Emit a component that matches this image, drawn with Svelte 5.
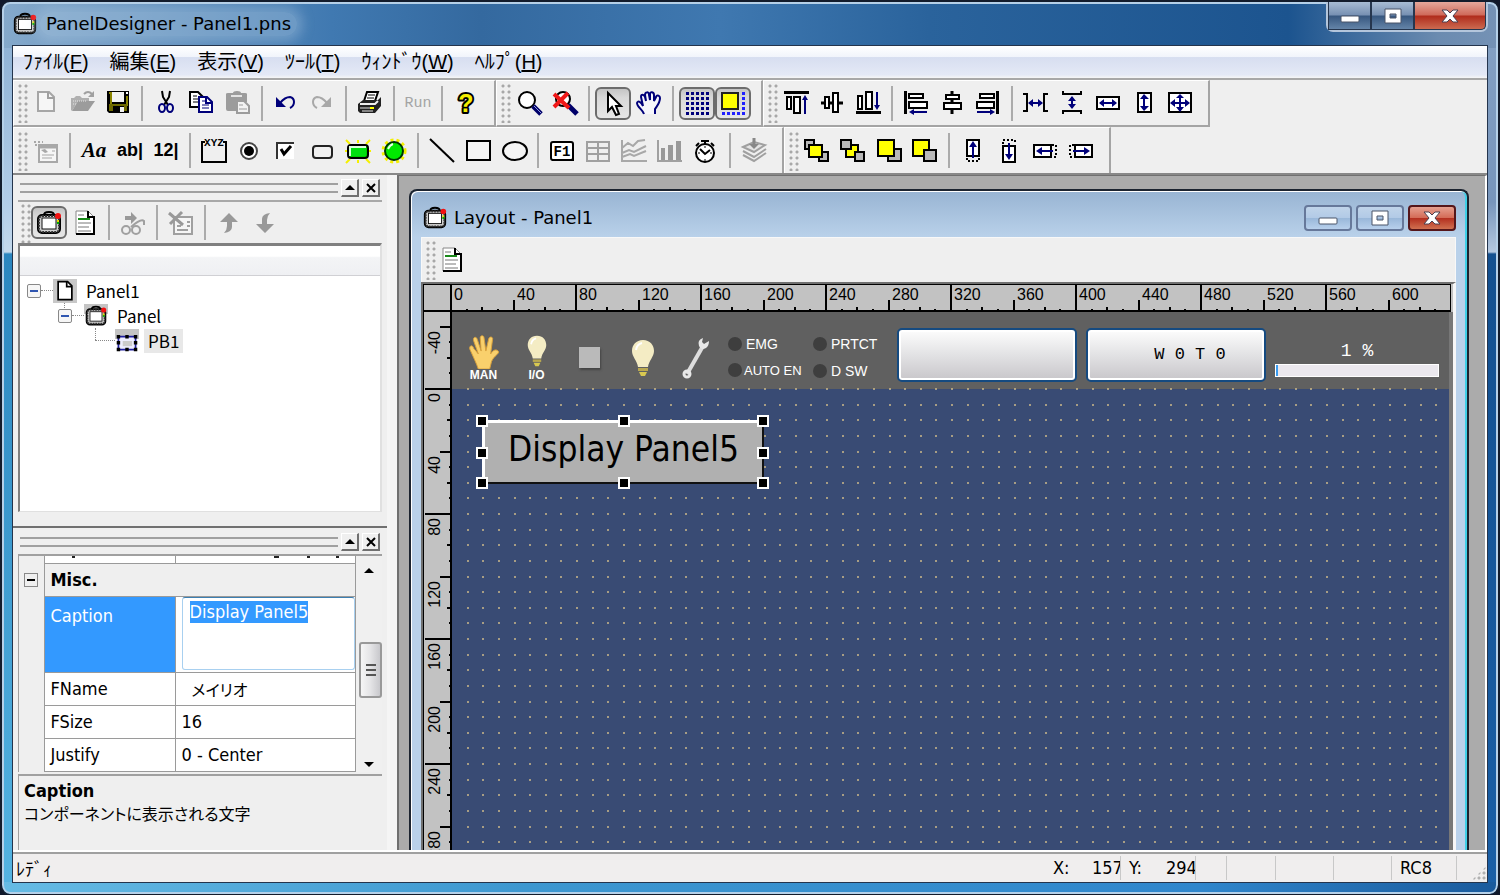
<script lang="ts">
    import { onMount } from 'svelte';

    type Item = { icon?: string; text?: string; kind?: string; label: string; pressed?: boolean; disabled?: boolean } | null;

    const tb = (icon: string, label: string, opts = {}): Item => ({ icon, label, ...opts });

    const K = 'fill="none" stroke="#000" stroke-width="2"';
    const W = 'fill="#fff" stroke="#000" stroke-width="2"';
    const N = 'fill="none" stroke="#00007a" stroke-width="2"';
    const NF = 'fill="#00007a"';
    const G = 'fill="none" stroke="#a0a0a0" stroke-width="2"';
    const Y = 'fill="#ff0" stroke="#000" stroke-width="2"';
    const B = 'fill="#b8b8b8" stroke="#000" stroke-width="2"';
    const DOT = 'fill="none" stroke="#000" stroke-width="2" stroke-dasharray="2 2"';

    const cells = [5, 10, 15, 20, 25];

    const icons: Record<string, string> = {
        new: `<path d="M6 3H17L22 8V22H6Z" fill="#f6f6f6" stroke="#a6a6a6" stroke-width="2"/><path d="M16 3V9H22" ${G}/>`,
        open: `<path d="M3 21V9H6L8 7H12L14 9H21V12H10L4 22Z" fill="#b0b0b0"/><path d="M4 22L10 12H27L20 22Z" fill="#9c9c9c"/><path d="M5 12h14M5 15h4" stroke="#e6e6e6" stroke-dasharray="1 1"/><path d="M16 5Q20 1 24 5" ${G}/><path d="M26 2V8H20Z" fill="#a0a0a0"/>`,
        save: `<path d="M3 2H25V24H5L3 22Z" fill="#000"/><path d="M5 4H7V16H23V7" fill="none" stroke="#8a8400" stroke-width="2"/><path d="M5 15h18v7H5Z" fill="#6d6900"/><path d="M8 3H20V13H8Z" fill="#f2f2f2"/><path d="M9 17H20V24H9Z" fill="#000"/><path d="M16 18h4v5h-4Z" fill="#f2f2f2"/><path d="M22 3h2v2h-2Z" fill="#fff"/>`,
        cut: `<path d="M10 2L11 8L16 16M18 2L17 8L12 16" ${K}/><ellipse cx="10" cy="19" rx="3" ry="4" ${N}/><ellipse cx="18" cy="19" rx="3" ry="4" ${N}/>`,
        copy: `<path d="M2 3H10L15 8V18H2Z" ${W}/><path d="M5 7h4M5 10h7M5 13h7" stroke="#000"/><path d="M11 8H19L24 13V23H11Z" fill="#fff" stroke="#00007a" stroke-width="2"/><path d="M18 8V14H24" ${N}/><path d="M14 12h3M14 16h7M14 19h7" stroke="#00007a"/>`,
        paste: `<path d="M2 5Q2 4 4 4H9Q9 2 13 2Q17 2 17 4H21Q23 4 23 5V13H12V22H4Q2 22 2 20Z" fill="#9c9c9c"/><path d="M7 7h11" stroke="#e4e4e4" stroke-width="2"/><path d="M13 12H20L25 17V24H13Z" fill="#f2f2f2" stroke="#9c9c9c" stroke-width="2"/><path d="M15 16h4M15 20h8" stroke="#9c9c9c"/>`,
        undo: `<path d="M4 8V18H14Z" ${NF}/><path d="M8 14Q13 8 18 8Q22 9 22 13Q22 17 18 19" ${N}/>`,
        redo: `<path d="M23 8V18H13Z" fill="#a8a8a8"/><path d="M19 14Q14 8 9 8Q5 9 5 13Q5 17 9 19" fill="none" stroke="#a8a8a8" stroke-width="2"/>`,
        print: `<path d="M8 12L11 3H22L19 12" ${W}/><path d="M12 6h7M11 9h7" stroke="#000"/><path d="M2 15L7 11H22L25 8V17L19 24H4L2 22Z" fill="#222"/><path d="M4 15H19L22 12" stroke="#eee" fill="none" stroke-width="2"/><path d="M4 19h14M6 22h11" stroke="#e6e6e6"/><path d="M14 19h4" stroke="#ff0" stroke-width="2"/>`,
        help: `<text x="14" y="23" text-anchor="middle" font-family="Liberation Sans" font-size="25" font-weight="bold" fill="#f4ee00" stroke="#000" stroke-width="4" stroke-linejoin="round" paint-order="stroke">?</text>`,
        find: `<circle cx="12" cy="11" r="8" ${W}/><path d="M18 17L26 25" stroke="#00006a" stroke-width="5"/><path d="M19 17L26 24" stroke="#8f9be0"/>`,
        unfind: `<circle cx="12" cy="10" r="7" ${W}/><path d="M17 16L26 25" stroke="#00006a" stroke-width="5"/><path d="M3 5L18 19M17 4L3 18" stroke="#f01818" stroke-width="4"/>`,
        cursor: `<path d="M9 4V22L13 18L17 26L20 25L17 17H22Z" fill="#fff" stroke="#000" stroke-width="2"/>`,
        hand: `<path d="M9 25C8 21 2 18 2 14C3 11 6 13 8 17L6 8C6 5 9 5 10 8L11 12L10 6C10 3 14 2 14 6L15 11L15 5C15 2 19 3 19 6V12L21 8C22 5 25 7 25 9C25 14 22 17 20 20V25" fill="#f6f6fb" stroke="#00007a" stroke-width="2"/>`,
        grid: cells.map((y) => cells.map((x) => `<path d="M${x - 2} ${y - 2}h3v3h-3Z" ${NF}/>`).join('')).join(''),
        snap: `<path d="M3 4H19V20H3Z" fill="#ff0" stroke="#222" stroke-width="2"/>` + cells.map((n) => `<path d="M23 ${n - 2}h3v3h-3ZM${n - 2} 23h3v3h-3Z" fill="#2020ff"/>`).join(''),
        alignTop: `<path d="M2 2H27V5H2Z"/><path d="M5 8H9V20H5ZM12 8H18V24H12Z" ${W}/><path d="M23 25V8" ${N}/><path d="M20 11L23 6L26 11Z" ${NF}/>`,
        alignMiddle: `<path d="M3 14H25" stroke="#000" stroke-width="3"/><path d="M7 8H11V19H7ZM15 4H20V23H15Z" ${W}/>`,
        alignBottom: `<path d="M2 22H27V25H2Z"/><path d="M4 7H8V20H4ZM12 3H18V20H12Z" ${W}/><path d="M23 3V18" ${N}/><path d="M20 16L23 21L26 16Z" ${NF}/>`,
        alignLeft: `<path d="M2 2H5V25H2Z"/><path d="M7 5H21V9H7ZM7 13H25V19H7Z" ${W}/><path d="M10 23H25" ${N}/><path d="M12 20L7 23L12 26Z" ${NF}/>`,
        alignCenter: `<path d="M14 2V25" stroke="#000" stroke-width="3"/><path d="M8 6H21V10H8ZM6 14H23V20H6Z" ${W}/>`,
        alignRight: `<path d="M22 2H25V25H22Z"/><path d="M6 5H20V9H6ZM3 13H20V19H3Z" ${W}/><path d="M3 23H18" ${N}/><path d="M16 20L21 23L16 26Z" ${NF}/>`,
        spaceH: `<path d="M1 5H5V22H1M26 5H22V22H26" ${K}/><path d="M8 14H19" ${N}/><path d="M6 14L11 10V18ZM21 14L16 10V18Z" ${NF}/>`,
        spaceV: `<path d="M5 2V5H23V2M5 25V22H23V25" ${K}/><path d="M14 9V18" ${N}/><path d="M14 7L10 12H18ZM14 20L10 15H18Z" ${NF}/>`,
        sameW: `<path d="M3 8H25V20H3Z" ${W}/><path d="M8 14H20" ${N}/><path d="M5 14L10 10V18ZM23 14L18 10V18Z" ${NF}/>`,
        sameH: `<path d="M8 4H21V23H8Z" ${W}/><path d="M14 8V20" ${N}/><path d="M14 5L10 10H19ZM14 22L10 17H19Z" ${NF}/>`,
        sameBoth: `<path d="M3 4H25V23H3Z" ${W}/><path d="M6 14H22M14 8V20" ${N}/><path d="M4 14L9 10V18ZM24 14L19 10V18ZM14 5L10 9H18ZM14 23L10 18H18Z" ${NF}/>`,
        dialog: `<path d="M7 8H25V25H7Z" fill="#f6f6f6" stroke="#a8a8a8" stroke-width="2"/><path d="M7 10H25" stroke="#a8a8a8" stroke-width="3"/><path d="M10 18h12M10 21h10M20 14h3" stroke="#a8a8a8"/><path d="M2 5h9M3 8h9" stroke="#a8a8a8" stroke-width="2" stroke-dasharray="2 2"/><path d="M9 13L13 12L16 15L13 16Z" fill="#a8a8a8"/>`,
        group: `<path d="M5 5H2V25H26V5H23" ${K}/><text x="14" y="9" text-anchor="middle" font-family="Liberation Mono" font-size="11" font-weight="bold">XYZ</text>`,
        radio: `<circle cx="13" cy="14" r="8" fill="#fff" stroke="#444" stroke-width="2"/><circle cx="13" cy="14" r="5"/>`,
        check: `<path d="M4 5H22V22H4Z" fill="#fff"/><path d="M5 22V6H22" fill="none" stroke="#333" stroke-width="2"/><path d="M9 12L12 17L19 9" fill="none" stroke="#000" stroke-width="3"/>`,
        button: `<rect x="5" y="9" width="19" height="12" rx="3" fill="#efefef" stroke="#222" stroke-width="2"/>`,
        lampButton: `<path d="M2 3l4 4M14 3v3M26 3l-4 4M1 14h3M24 14h3M2 26l4-4M14 26v-3M26 26l-4-4" stroke="#f4f000" stroke-width="2"/><rect x="4" y="8" width="20" height="13" rx="3" fill="#0c0" stroke="#000" stroke-width="2"/><path d="M6 19V10H22" fill="none" stroke="#dfd" stroke-width="2"/><path d="M7 11H22V19H7Z" fill="#00e010"/>`,
        lampRound: `<circle cx="14" cy="14" r="11" fill="none" stroke="#f4f000" stroke-width="3" stroke-dasharray="3 3"/><circle cx="14" cy="14" r="9" fill="#00e800" stroke="#030" stroke-width="2"/><path d="M8 12Q10 8 13 7" fill="none" stroke="#eaffea" stroke-width="2"/>`,
        line: `<path d="M2 2L26 25" ${K}/>`,
        rect: `<path d="M3 4H26V23H3Z" fill="#f5f5f5" stroke="#000" stroke-width="2"/>`,
        ellipse: `<ellipse cx="15" cy="14" rx="12" ry="9" fill="#f5f5f5" stroke="#000" stroke-width="2"/>`,
        fkey: `<rect x="3" y="5" width="22" height="18" rx="2" ${W}/><path d="M4 23H25V7" fill="none" stroke="#000" stroke-width="2"/><text x="14" y="19" text-anchor="middle" font-family="Liberation Mono" font-size="14" font-weight="bold">F1</text>`,
        table: `<path d="M3 5H25V24H3ZM3 11H25M3 17H25M14 5V24" ${G}/>`,
        lines: `<path d="M2 3V24H27M2 16L9 13L14 15L26 9M2 20L10 17L14 19L26 14M2 11L8 6L13 9L18 4L25 3" fill="none" stroke="#a8a8a8" stroke-width="2"/>`,
        bars: `<path d="M2 3V24H26" ${G}/><path d="M5 11H9V23H5ZM12 8H17V23H12ZM20 4H25V23H20Z" fill="#999"/>`,
        timer: `<circle cx="13" cy="16" r="9" fill="#fff" stroke="#000" stroke-width="2"/><path d="M9 4H17M13 4V7M4 9L7 6M22 9L19 6" ${K}/><path d="M8 12L13 17L18 13" ${K}/><path d="M13 9v2M13 22v2M6 16h2M18 16h2" stroke="#000"/>`,
        layers: `<path d="M3 18L14 24L26 16M3 14L14 20L26 12" ${G}/><path d="M3 10L14 5L25 8L14 15Z" fill="#e4e4e4" stroke="#a0a0a0" stroke-width="2"/><path d="M14 1V9" stroke="#888" stroke-width="3"/><path d="M9 7H19L14 12Z" fill="#888"/>`,
        forward: `<path d="M2 3H11V12H2ZM16 15H25V24H16Z" ${B}/><path d="M6 8H19V20H6Z" ${Y}/>`,
        backward: `<path d="M7 8H19V20H7Z" ${Y}/><path d="M2 3H12V12H2ZM16 15H25V24H16Z" ${B}/>`,
        front: `<path d="M13 12H26V24H13Z" ${B}/><path d="M3 3H19V19H3Z" ${Y}/>`,
        back: `<path d="M2 3H18V19H2Z" ${Y}/><path d="M13 13H25V24H13Z" ${B}/>`,
        moveUp: `<path d="M8 3H20V19H8Z" ${W}/><path d="M8 21V24H20V20" ${DOT}/><path d="M14 7V21" ${N}/><path d="M14 4L10 10H18Z" ${NF}/>`,
        moveDown: `<path d="M8 9H20V25H8Z" ${W}/><path d="M8 7V3H20V7" ${DOT}/><path d="M14 6V19" ${N}/><path d="M14 23L10 17H18Z" ${NF}/>`,
        moveLeft: `<path d="M3 8H20V20H3Z" ${W}/><path d="M21 8H25V20H21" ${DOT}/><path d="M8 14H22" ${N}/><path d="M5 14L11 10V18Z" ${NF}/>`,
        moveRight: `<path d="M8 8H25V20H8Z" ${W}/><path d="M7 8H3V20H7" ${DOT}/><path d="M6 14H20" ${N}/><path d="M23 14L17 10V18Z" ${NF}/>`,
        panel: `<path d="M9 6Q9 3 14 3Q19 3 19 6" ${K}/><rect x="3" y="6" width="22" height="18" rx="4" fill="#d0d0d0" stroke="#000" stroke-width="2"/><rect x="4" y="7" width="20" height="16" rx="3" fill="none" stroke="#333" stroke-width="2" stroke-dasharray="2 1"/><rect x="7" y="9" width="14" height="11" fill="#fff" stroke="#111"/><circle cx="23" cy="7" r="3" fill="#f21010"/><path d="M23 11v3" stroke="#e8d800" stroke-width="2"/><path d="M23 13v2" stroke="#0a0" stroke-width="2"/>`,
        source: `<path d="M5 2H17L23 8V25H5Z" fill="#fff" stroke="#888"/><path d="M17 2V8H23V25H5" ${K}/><path d="M7 10H19" stroke="#1a8a1a" stroke-width="2"/><path d="M7 14H20M7 18H18M7 22H20M7 6H13" stroke="#777"/>`,
        build: `<circle cx="7" cy="21" r="4" ${G}/><circle cx="17" cy="21" r="4" ${G}/><path d="M6 7H12V3L18 9L12 15V11H6Z" fill="#999"/><path d="M12 18Q22 9 25 12V16" ${G}/>`,
        remove: `<path d="M7 8H25V25H7Z" fill="#f6f6f6" stroke="#a0a0a0" stroke-width="2"/><path d="M10 17h4M10 21h11M20 13h3M20 17h3" stroke="#a0a0a0" stroke-width="2"/><path d="M2 4L16 16M15 3L3 15" stroke="#999" stroke-width="3"/>`,
        up: `<path d="M14 4L23 13H17V18Q17 23 9 24Q12 21 12 17V13H5Z" fill="#999"/>`,
        down: `<path d="M14 24L5 15H11V10Q11 5 19 4Q16 7 16 11V15H23Z" fill="#999"/>`,
        page: `<path d="M6 3H17L22 8V24H6Z" ${W}/><path d="M16 3V9H22" ${K}/>`,
        part: `<path d="M4 9H24V24H4Z" fill="#eef" stroke="#2020a0" stroke-width="2"/><path d="M9 14H20V20H9Z" fill="#ccc"/><path d="M2 7h4v4H2ZM12 7h4v4h-4ZM22 7h4v4h-4ZM2 22h4v4H2ZM12 22h4v4h-4ZM22 22h4v4h-4ZM2 14h4v4H2ZM22 14h4v4h-4Z"/>`
    };

    const off = { disabled: true };
    const on = { pressed: true };

    const rows: Item[][][] = [
        [
            [
                tb('new', 'New', off), tb('open', 'Open', off), tb('save', 'Save'), null,
                tb('cut', 'Cut'), tb('copy', 'Copy'), tb('paste', 'Paste', off), null,
                tb('undo', 'Undo'), tb('redo', 'Redo', off), null,
                tb('print', 'Print'), null,
                { text: 'Run', kind: 'run', label: 'Run', disabled: true }, null,
                tb('help', 'Help')
            ],
            [
                tb('find', 'Find'), tb('unfind', 'Clear find'), null,
                tb('cursor', 'Select', on), tb('hand', 'Pan'), null,
                tb('grid', 'Show grid', on), tb('snap', 'Snap to grid', on)
            ],
            [
                tb('alignTop', 'Align top'), tb('alignMiddle', 'Align middle'), tb('alignBottom', 'Align bottom'), null,
                tb('alignLeft', 'Align left'), tb('alignCenter', 'Align center'), tb('alignRight', 'Align right'), null,
                tb('spaceH', 'Space across'), tb('spaceV', 'Space down'), tb('sameW', 'Same width'),
                tb('sameH', 'Same height'), tb('sameBoth', 'Same size')
            ]
        ],
        [
            [
                tb('dialog', 'Properties', off), null,
                { text: 'Aa', kind: 'label', label: 'Label' },
                { text: 'ab|', kind: 'edit', label: 'Text box' },
                { text: '12|', kind: 'edit', label: 'Numeric box' }, null,
                tb('group', 'Group box'), tb('radio', 'Option button'), tb('check', 'Check box'),
                tb('button', 'Button'), tb('lampButton', 'Lamp button'), tb('lampRound', 'Lamp'), null,
                tb('line', 'Line'), tb('rect', 'Rectangle'), tb('ellipse', 'Ellipse'), null,
                tb('fkey', 'Function key'), tb('table', 'Table', off), tb('lines', 'Line chart', off),
                tb('bars', 'Bar chart', off), tb('timer', 'Timer'), null,
                tb('layers', 'Layers', off)
            ],
            [
                tb('forward', 'Bring forward'), tb('backward', 'Send backward'),
                tb('front', 'Bring to front'), tb('back', 'Send to back'), null,
                tb('moveUp', 'Move up'), tb('moveDown', 'Move down'), tb('moveLeft', 'Move left'), tb('moveRight', 'Move right')
            ]
        ]
    ];

    const treeTools: Item[] = [
        tb('panel', 'Panel view', on), tb('source', 'Source view'), null,
        tb('build', 'Check', off), null,
        tb('remove', 'Remove', off), null,
        tb('up', 'Up', off), tb('down', 'Down', off)
    ];

    const menus = [
        ['ﾌｧｲﾙ', 'F'],
        ['編集', 'E'],
        ['表示', 'V'],
        ['ﾂｰﾙ', 'T'],
        ['ｳｨﾝﾄﾞｳ', 'W'],
        ['ﾍﾙﾌﾟ', 'H']
    ];

    const tree = [
        { name: 'Panel1', icon: 'page', level: 0, open: true },
        { name: 'Panel', icon: 'panel', level: 1, open: true },
        { name: 'PB1', icon: 'part', level: 2, selected: true }
    ];

    const props = [
        ['FName', 'メイリオ'],
        ['FSize', '16'],
        ['Justify', '0 - Center']
    ];

    // 80 design units take 125 screen pixels
    const px = (units: number) => Math.round((units * 125) / 80);
    const tick = (u: number) => (u % 80 === 0 ? 27 : u % 40 === 0 ? 12 : u % 20 === 0 ? 5 : 3);

    const across = Array.from({ length: 65 }, (_, i) => i * 10);
    const down = Array.from({ length: 35 }, (_, i) => (i - 5) * 10);
    const dots = down
        .filter((u) => u >= 0)
        .map((v) => across.slice(1, -1).map((u) => `M${px(u) - 1} ${px(v)}h2`).join(''))
        .join('');

    const handles = ['nw', 'n', 'ne', 'w', 'e', 'sw', 's', 'se'];

    let caption = $state('Display Panel5');
    let captionBox: HTMLTextAreaElement;

    onMount(() => {
        captionBox.focus();
        captionBox.select();
    });
</script>

{#snippet glyph(name: string)}
    <svg class="glyph" width="28" height="28" viewBox="0 0 28 28" aria-hidden="true">{@html icons[name]}</svg>
{/snippet}

{#snippet tools(items: Item[])}
    <span class="grip"></span>
    {#each items as item}
        {#if item}
            <button class={['tool', item.kind, { pressed: item.pressed }]} disabled={item.disabled} aria-label={item.label}>
                {#if item.icon}{@render glyph(item.icon)}{:else}{item.text}{/if}
            </button>
        {:else}
            <span class="sep"></span>
        {/if}
    {/each}
{/snippet}

{#snippet captionButtons()}
    <button aria-label="Minimize"><svg width="20" height="16" viewBox="0 0 20 16"><rect x="1" y="8" width="18" height="6" rx="1" fill="#fff" stroke="#4b5568" stroke-width="1" /></svg></button>
    <button aria-label="Maximize"><svg width="20" height="16" viewBox="0 0 20 16"><path d="M2 1H18V15H2ZM7 6V10H13V6Z" fill="#fff" fill-rule="evenodd" stroke="#4b5568" stroke-width="1" /></svg></button>
    <button class="close" aria-label="Close"><svg width="20" height="16" viewBox="0 0 20 16"><path d="M2 2H7L10 5L13 2H18L13 8L18 14H13L10 11L7 14H2L7 8Z" fill="#fff" stroke="#4b4050" stroke-width="1" /></svg></button>
{/snippet}

{#snippet dockHeader()}
    <div class="dock-header">
        <span class="rails"></span>
        <button aria-label="Collapse"><svg width="10" height="10" viewBox="0 0 10 10"><path d="M0 7L5 2L10 7Z" /></svg></button>
        <button aria-label="Close"><svg width="10" height="10" viewBox="0 0 10 10"><path d="M1 1L9 9M9 1L1 9" stroke="#000" stroke-width="2" /></svg></button>
    </div>
{/snippet}

{#snippet bulb()}
    <svg width="30" height="38" viewBox="0 0 30 38" aria-hidden="true">
        <path d="M15 1C8 1 4 6 4 12C4 18 9 21 10 28H20C21 21 26 18 26 12C26 6 22 1 15 1Z" fill="#f4ecc4" />
        <path d="M8 11Q9 5 14 4" fill="none" stroke="#fff" stroke-width="2" />
        <path d="M10 29H20V32H10Z" fill="#b9a850" /><path d="M11 33H19L17 37H13Z" fill="#d8c850" />
    </svg>
{/snippet}

<div class="window">
    <header class="titlebar">
        {@render glyph('panel')}
        <h1>PanelDesigner - Panel1.pns</h1>
        <div class="caption-buttons">{@render captionButtons()}</div>
    </header>

    <div class="client">
        <nav class="menubar">
            {#each menus as [name, key]}
                <button>{name}(<u>{key}</u>)</button>
            {/each}
        </nav>

        {#each rows as bands}
            <div class="toolbar">
                {#each bands as band}
                    <div class="band">{@render tools(band)}</div>
                {/each}
            </div>
        {/each}

        <main>
            <aside>
                <section class="dock">
                    {@render dockHeader()}
                    <div class="tree-tools">{@render tools(treeTools)}</div>
                    <div class="tree">
                        <div class="tree-head"></div>
                        <ul>
                            {#each tree as node}
                                <li class={['node', `level${node.level}`]}>
                                    {#if node.open}
                                        <button class="expander" aria-label="Collapse {node.name}"></button>
                                    {:else}
                                        <span class="no-expander"></span>
                                    {/if}
                                    <span class="branch"></span>
                                    <span class="node-icon">{@render glyph(node.icon)}</span>
                                    <span class={['name', { selected: node.selected }]}>{node.name}</span>
                                </li>
                            {/each}
                        </ul>
                    </div>
                </section>

                <section class="dock lower">
                    {@render dockHeader()}
                    <div class="props">
                        <table>
                            <tbody>
                                <tr class="cut-row"><td class="gutter"></td><td></td><td></td></tr>
                                <tr class="category">
                                    <td class="gutter"><button class="fold" aria-label="Collapse Misc."></button></td>
                                    <th colspan="2">Misc.</th>
                                </tr>
                                <tr class="active">
                                    <td class="gutter"></td>
                                    <td><label for="caption">Caption</label></td>
                                    <td class="editor"><textarea id="caption" bind:this={captionBox} bind:value={caption} spellcheck="false"></textarea></td>
                                </tr>
                                {#each props as [key, value]}
                                    <tr>
                                        <td class="gutter"></td>
                                        <td>{key}</td>
                                        <td class={{ ja: key === 'FName' }}>{value}</td>
                                    </tr>
                                {/each}
                            </tbody>
                        </table>
                        <div class="scrollbar">
                            <button aria-label="Scroll up"><svg width="10" height="5" viewBox="0 0 10 5"><path d="M0 5L5 0L10 5Z" /></svg></button>
                            <span class="thumb"><i></i></span>
                            <button aria-label="Scroll down"><svg width="10" height="5" viewBox="0 0 10 5"><path d="M0 0L5 5L10 0Z" /></svg></button>
                        </div>
                    </div>
                    <div class="help">
                        <strong>Caption</strong>
                        <p>コンポーネントに表示される文字</p>
                    </div>
                </section>
            </aside>

            <div class="mdi">
                <section class="child">
                    <header class="child-title">
                        {@render glyph('panel')}
                        <h2>Layout - Panel1</h2>
                        <div class="child-buttons">{@render captionButtons()}</div>
                    </header>
                    <div class="child-tools">{@render tools([tb('source', 'Source')])}</div>
                    <div class="design">
                        <div class="corner"></div>
                        <svg class="ruler-x" aria-hidden="true">
                            {#each across as u}
                                <path d="M{px(u) + 1} {27 - tick(u)}V27" />
                                {#if u % 40 === 0 && u < 640}
                                    <text x={px(u) + 4} y="15">{u}</text>
                                {/if}
                            {/each}
                        </svg>
                        <svg class="ruler-y" aria-hidden="true">
                            {#each down as u}
                                {@const y = px(u) + 77}
                                <path d="M{28 - tick(u)} {y}H28" />
                                {#if u % 40 === 0}
                                    <text transform="translate(16 {y + 4}) rotate(-90)">{u}</text>
                                {/if}
                            {/each}
                        </svg>
                        <div class="screen">
                            <div class="ribbon">
                                <div class="item">
                                    <svg width="32" height="36" viewBox="0 0 32 36" aria-hidden="true">
                                        <path d="M10 36C8 30 5 24 1 15C0 11 4 10 5 14L10 20L5 6C4 2 8 1 9 5L13 17L12 3C12 0 16 0 16 3L18 17L21 4C22 1 26 2 25 5L23 20C25 17 28 14 31 17C33 20 27 21 24 28L22 36Z" fill="#f9d06c" stroke="#d9a03a" />
                                    </svg>
                                    <span>MAN</span>
                                </div>
                                <div class="item">{@render bulb()}<span>I/O</span></div>
                                <div class="item"><i class="square"></i></div>
                                <div class="item">{@render bulb()}</div>
                                <div class="item">
                                    <svg width="30" height="44" viewBox="0 0 30 44" aria-hidden="true">
                                        <path d="M6 38L22 10" stroke="#ddd" stroke-width="4" />
                                        <path d="M22 2Q16 4 18 10Q20 15 25 12Q28 10 28 5L23 8L21 6Z" fill="#e8e8e8" />
                                        <circle cx="6" cy="38" r="3" fill="none" stroke="#e8e8e8" stroke-width="3" />
                                    </svg>
                                </div>
                                <div class="leds">
                                    <span>EMG</span><span>PRTCT</span><span>AUTO EN</span><span>D SW</span>
                                </div>
                                <button class="pad" aria-label="Blank"></button>
                                <button class="pad">W 0 T 0</button>
                                <div class="speed">
                                    <label for="speed">1 %</label>
                                    <progress id="speed" value="1" max="100"></progress>
                                </div>
                            </div>
                            <div class="canvas">
                                <svg class="dots" aria-hidden="true"><path d={dots} /></svg>
                                <div class="placed">
                                    {caption}
                                    {#each handles as h}<span class={['handle', h]}></span>{/each}
                                </div>
                            </div>
                        </div>
                        <div class="edge"></div>
                    </div>
                </section>
            </div>
        </main>

        <footer class="status">
            <span class="ready">ﾚﾃﾞｨ</span>
            <span class="cell x"><b>X:</b>157</span>
            <span class="cell y"><b>Y:</b>294</span>
            <span class="cell s1"></span>
            <span class="cell s2"></span>
            <span class="cell s3"></span>
            <span class="cell s3"></span>
            <span class="cell rc">RC8</span>
            <span class="size-grip"></span>
        </footer>
    </div>
</div>

<style>
    :global(body) {
        margin: 0;
        background: #10182a;
    }
    .window {
        --ui: 'DejaVu Sans Condensed', 'DejaVu Sans', 'Noto Sans CJK JP', sans-serif;
        --ja: 'Noto Sans CJK JP', sans-serif;
        display: flex;
        flex-direction: column;
        box-sizing: border-box;
        height: 100vh;
        overflow: hidden;
        border: solid #131c2c;
        border-width: 2px 2px 1px;
        padding: 0 10px 11px;
        border-radius: 10px;
        box-shadow: inset 0 0 0 2px #b5d0e8;
        background:
            linear-gradient(90deg, #85a9cb 0, #4079b1 22%, #34699f 32%, #3f78b0 48%, #2a639c 62%, #1c548f 86%, #6b8bb0 96%, #7592b5) top / 100% 46px no-repeat,
            linear-gradient(90deg, #66bbe4, #3d97d0 35%, #2f86cc 80%, #1a5a9c) bottom / 100% 12px no-repeat,
            linear-gradient(#86abd0, #b2cde8 200px, #c4d9ec 250px, #2b86bf 252px, #55b4e2) left / 30px 100% no-repeat,
            linear-gradient(#86a2c4, #7795bb 200px, #b4c8e0 250px, #14508f 252px, #1a5fa6) right / 30px 100% no-repeat;
        font: 18px/24px var(--ui);
        color: #000;
    }
    button {
        padding: 0;
        border: 0;
        background: none;
        font: inherit;
        color: inherit;
    }
    .glyph {
        display: block;
        flex: none;
    }

    .titlebar {
        display: flex;
        align-items: center;
        height: 43px;
        flex: none;
    }
    .titlebar .glyph {
        width: 26px;
        height: 26px;
    }
    h1,
    h2 {
        margin: 0;
        font: 18px/24px 'DejaVu Sans', sans-serif;
        white-space: nowrap;
    }
    h1 {
        margin-left: 2px;
        padding: 0 6px;
        border-radius: 12px;
        background: rgba(180, 205, 230, 0.35);
        box-shadow: 0 0 12px 6px rgba(180, 205, 230, 0.35);
    }
    .caption-buttons,
    .child-buttons {
        display: flex;
        margin-left: auto;
    }
    .caption-buttons button,
    .child-buttons button {
        display: flex;
        align-items: center;
        justify-content: center;
    }
    .caption-buttons {
        align-self: flex-start;
        border: 2px solid #b4c6dc;
        border-top: 0;
        border-radius: 0 0 7px 7px;
    }
    .caption-buttons button {
        width: 43px;
        height: 28px;
        border: 1px solid #26364e;
        border-top: 0;
        background: linear-gradient(#a8bcd4, #7790b2 48%, #37577f 52%, #6484a8);
    }
    .caption-buttons .close {
        width: 72px;
        border-radius: 0 0 5px 0;
        background: linear-gradient(#e6a89c, #cf6a5a 48%, #b02c1c 52%, #cc6a50);
    }
    .child-buttons {
        gap: 4px;
    }
    .child-buttons button {
        width: 48px;
        height: 26px;
        border: 2px solid #66789a;
        border-radius: 4px;
        background: linear-gradient(#c0d4ea, #b2cae6 48%, #9ab8da 52%, #b8d0ec);
    }
    .child-buttons .close {
        border-color: #55161a;
        background: linear-gradient(#e6a090, #d46c58 48%, #b43020 52%, #d07050);
    }

    .client {
        display: flex;
        flex-direction: column;
        flex: 1;
        min-height: 0;
        border: 1px solid #24344c;
        background: #efefef;
    }
    .menubar {
        display: flex;
        gap: 21px;
        flex: none;
        height: 32px;
        padding-left: 10px;
        border-bottom: 2px solid #a8a8a8;
        background: linear-gradient(#fff, #f1f4fb 34%, #d7def0 36%, #e4e9f6 90%, #f6f6f6);
        font: 20px/30px 'Liberation Sans', var(--ja);
    }
    .menubar button {
        white-space: nowrap;
    }

    .toolbar {
        display: flex;
        flex: none;
        height: 47px;
    }
    .toolbar + .toolbar {
        border-bottom: 2px solid #888;
        height: 46px;
    }
    .band {
        display: flex;
        align-items: center;
        box-sizing: border-box;
        padding: 0 10px 0 3px;
        border: 1px solid #fff;
        border-right: 2px solid #a4a4a4;
        border-bottom: 2px solid #a4a4a4;
    }
    .toolbar + .toolbar .band {
        border-bottom: 0;
    }
    .grip {
        flex: none;
        width: 11px;
        height: 40px;
        background:
            radial-gradient(circle at 3px 3px, #a8a8a8 1px, transparent 2px) 0 0 / 6px 6px;
    }
    .tool {
        display: flex;
        flex: none;
        align-items: center;
        justify-content: center;
        box-sizing: border-box;
        width: 36px;
        height: 33px;
    }
    .pressed {
        border: 2px solid #6c6c6c;
        border-radius: 6px;
        background: linear-gradient(#c4c4c4, #d8d8d8 30%, #e6e6e6);
    }
    .sep {
        flex: none;
        width: 2px;
        height: 35px;
        margin: 0 5px;
        background: #ababab;
    }
    .run {
        font: 15px 'Liberation Mono', monospace;
        color: #a4a4a4;
    }
    .label {
        font: italic bold 21px 'Liberation Serif', serif;
    }
    .edit {
        font: bold 18px 'Liberation Sans', sans-serif;
    }

    main {
        display: flex;
        flex: 1;
        min-height: 0;
    }
    aside {
        display: flex;
        flex-direction: column;
        flex: none;
        width: 384px;
        box-shadow: inset -10px 0 0 #f5f5f5;
    }
    .dock {
        display: flex;
        flex-direction: column;
        box-sizing: border-box;
        flex: 337 1 0;
        min-height: 0;
        padding: 1px 15px 14px 5px;
    }
    .lower {
        flex: 322 1 0;
        margin-right: 10px;
        padding: 2px 5px 0;
        border-top: 2px solid #707070;
    }
    .dock-header {
        display: flex;
        align-items: center;
        gap: 3px;
        flex: none;
        height: 24px;
        padding: 0 2px;
    }
    .rails {
        flex: 1;
        height: 6px;
        border: solid #a0a0a0;
        border-width: 2px 0;
    }
    .dock-header button {
        display: flex;
        align-items: center;
        justify-content: center;
        box-sizing: border-box;
        width: 18px;
        height: 18px;
        border: 1px solid #fff;
        border-right: 2px solid #707070;
        border-bottom: 2px solid #707070;
    }
    .tree-tools {
        display: flex;
        align-items: center;
        flex: none;
        height: 41px;
        padding-left: 2px;
        border-top: 2px solid #a8a8a8;
    }
    .tree {
        flex: 1;
        min-height: 0;
        border: solid #808080;
        border-width: 3px 2px 1px;
        border-right-color: #e0e0e0;
        border-bottom-color: #e0e0e0;
        background: #fff;
    }
    .tree-head {
        height: 29px;
        border-bottom: 1px solid #d0d0d4;
        background: linear-gradient(#fff 35%, #f3f4f6 40%, #eff0f3);
    }
    ul {
        margin: 0;
        padding: 2px 0 0 7px;
        list-style: none;
    }
    .node {
        position: relative;
        display: flex;
        align-items: center;
        height: 25px;
        font: 17px/24px var(--ja);
    }
    .level1 {
        padding-left: 31px;
    }
    .level2 {
        padding-left: 62px;
    }
    .level1::before,
    .level2::before {
        content: '';
        position: absolute;
        left: 37px;
        top: 0;
        height: 5px;
        border-left: 1px dotted #888;
    }
    .level2::before {
        left: 68px;
        height: 12px;
    }
    .expander,
    .fold {
        width: 14px;
        height: 14px;
        box-sizing: border-box;
        border: 1px solid #888;
        border-radius: 2px;
        background: linear-gradient(#3056b0, #3056b0) center / 8px 2px no-repeat #f6f6f6;
    }
    .no-expander {
        width: 6px;
    }
    .branch {
        width: 12px;
        border-top: 1px dotted #888;
    }
    .level2 .branch {
        width: 20px;
    }
    .node-icon {
        width: 24px;
        height: 24px;
        background: #c8c8c8;
    }
    .level1 .node-icon,
    .level2 .node-icon {
        background: linear-gradient(#c4c4c4 10px, #fff 10px);
    }
    .node-icon .glyph {
        width: 24px;
        height: 24px;
    }
    .name {
        margin-left: 5px;
        padding: 0 4px;
    }
    .selected {
        background: #e8e8e8;
    }

    .props {
        display: flex;
        flex: 1;
        min-height: 0;
        overflow: hidden;
        border: 1px solid #a0a0a0;
        border-width: 2px 0 0 1px;
    }
    table {
        flex: 1;
        border-collapse: collapse;
        table-layout: fixed;
    }
    td,
    th {
        box-sizing: border-box;
        height: 33px;
        padding: 0 6px;
        border: 1px solid #9a9a9a;
        background: #fff;
        font-size: 18px;
        line-height: 24px;
        text-align: left;
        white-space: nowrap;
    }
    .cut-row td {
        height: 7px;
        border-top: 0;
    }
    /* feet of the row scrolled out above */
    .cut-row td:nth-child(2) {
        background: linear-gradient(#222, #222) 27px 0 / 3px 2px no-repeat #fff;
    }
    .cut-row td:nth-child(3) {
        background:
            linear-gradient(#222, #222) 98px 0 / 5px 2px no-repeat,
            linear-gradient(#222, #222) 131px 0 / 3px 2px no-repeat,
            linear-gradient(#222, #222) 160px 0 / 3px 2px no-repeat,
            #fff;
    }
    .gutter {
        width: 25px;
        padding: 0 5px;
    }
    td.gutter,
    th {
        background: #efefef;
    }
    td.gutter {
        border-width: 0 1px 0 0;
    }
    .fold {
        display: block;
        border-radius: 0;
        background: linear-gradient(#000, #000) center / 8px 2px no-repeat;
    }
    td:nth-child(2) {
        width: 131px;
    }
    .active td {
        height: 75px;
        padding-top: 7px;
        vertical-align: top;
    }
    .active td:nth-child(2) {
        background: #3399ff;
        color: #fff;
    }
    td.editor {
        padding: 0 0 0 6px;
    }
    textarea {
        display: block;
        box-sizing: border-box;
        width: 100%;
        height: 73px;
        padding: 3px 7px;
        border: 1px solid #a8d0f0;
        border-top-color: #3c7fb1;
        border-radius: 3px;
        outline: 0;
        overflow: hidden;
        resize: none;
        font: 18px/22px var(--ui);
    }
    textarea::selection {
        background: #3399ff;
        color: #fff;
    }
    td.ja {
        padding-left: 16px;
        font-family: var(--ja);
        font-size: 16px;
        font-feature-settings: 'palt';
    }
    .scrollbar {
        display: flex;
        flex-direction: column;
        justify-content: space-between;
        flex: none;
        width: 26px;
        padding: 2px 0;
        background: #f0f0f0;
    }
    .scrollbar button {
        height: 18px;
        line-height: 12px;
    }
    .thumb {
        display: flex;
        align-items: center;
        justify-content: center;
        box-sizing: border-box;
        width: 23px;
        height: 56px;
        margin: 12px 0 0 3px;
        border: 2px solid #999;
        border-radius: 3px;
        background: linear-gradient(90deg, #f6f6f6, #e4e4e6 50%, #c8c8cc);
    }
    .thumb i {
        width: 10px;
        height: 12px;
        background: repeating-linear-gradient(#555 0 2px, transparent 2px 5px);
    }
    .help {
        box-sizing: border-box;
        flex: none;
        height: 78px;
        margin-top: 2px;
        padding: 3px 5px;
        border: 1px solid #a0a0a0;
        border-width: 2px 0 0 1px;
        line-height: 24px;
    }
    .help p {
        margin: 0;
        font-family: var(--ja);
        font-size: 16px;
        font-feature-settings: 'palt';
        line-height: 20px;
        white-space: nowrap;
    }

    .mdi {
        display: flex;
        flex: 1;
        min-width: 0;
        padding: 13px 16px 0 10px;
        border: solid #707070;
        border-width: 1px 2px 0;
        border-right-color: #fff;
        background: #ababab;
    }
    .child {
        display: flex;
        flex-direction: column;
        flex: 1;
        min-width: 0;
        padding: 0 11px 0 10px;
        border: 1px solid #1c2430;
        border-width: 2px 2px 0;
        border-radius: 8px 8px 0 0;
        box-shadow: inset 1px 1px 0 #fff, inset -2px 0 0 #3fd0e8;
        background: linear-gradient(#98b4d3, #b9d1ea 46px);
    }
    .child-title {
        display: flex;
        align-items: center;
        flex: none;
        height: 46px;
        padding-top: 8px;
        box-sizing: border-box;
    }
    .child-title .glyph {
        width: 26px;
        margin-left: 1px;
    }
    .child-title h2 {
        margin-left: 6px;
    }
    .child-tools {
        display: flex;
        align-items: center;
        flex: none;
        height: 44px;
        padding-left: 3px;
        border: 1px solid #f8f8f8;
        border-bottom: 0;
        background: #efefef;
    }
    .child-tools .tool {
        width: 32px;
    }
    .design {
        display: grid;
        grid-template: 28px 1fr / 29px 1fr 4px;
        flex: 1;
        min-height: 0;
        border: solid #707070;
        border-width: 2px 3px 0 2px;
        border-right-color: #f6f6f6;
        background: #c2c2c2;
        overflow: hidden;
    }
    .corner,
    .ruler-x,
    .ruler-y {
        box-sizing: border-box;
        width: 100%;
        height: 100%;
        border: solid #000;
        border-width: 0;
    }
    .corner {
        border-width: 1px 2px 2px 1px;
    }
    .ruler-x {
        grid-column: 2 / 4;
        border-width: 1px 0 2px;
        margin-left: -2px;
    }
    .ruler-y {
        grid-row: 2;
        border-width: 0 2px 0 1px;
    }
    .ruler-x path,
    .ruler-y path {
        stroke: #000;
        stroke-width: 2;
    }
    .ruler-x text,
    .ruler-y text {
        font: 16px 'Liberation Sans', sans-serif;
    }
    .ruler-y text {
        text-anchor: end;
    }
    .screen {
        display: flex;
        flex-direction: column;
        min-width: 0;
        overflow: hidden;
    }
    .edge {
        background: #777;
    }
    .ribbon {
        display: flex;
        align-items: center;
        flex: none;
        box-sizing: border-box;
        height: 77px;
        padding: 14px 0 0 5px;
        background: #606060;
        color: #fff;
    }
    .item {
        display: flex;
        flex-direction: column;
        align-items: center;
        flex: none;
        width: 53px;
        font: bold 12px/12px 'Liberation Sans', sans-serif;
    }
    .item:first-child svg {
        height: 34px;
    }
    .item:nth-child(2) svg {
        height: 32px;
        margin-bottom: 2px;
    }
    .square {
        width: 21px;
        height: 21px;
        background: #bababa;
        box-shadow: 1px 2px 2px #444;
    }
    .leds {
        display: grid;
        grid-template-columns: 85px 84px;
        row-gap: 9px;
        padding-left: 6px;
        font: 14px/18px 'Liberation Sans', sans-serif;
        white-space: nowrap;
    }
    .leds span::before {
        content: '';
        display: inline-block;
        width: 14px;
        height: 14px;
        margin-right: 4px;
        border-radius: 50%;
        background: #3e3e3e;
        vertical-align: -2px;
    }
    .leds span:nth-child(3)::before {
        margin-right: 2px;
    }
    .leds span:nth-child(3) {
        font-size: 13px;
    }
    .pad {
        box-sizing: border-box;
        flex: none;
        width: 180px;
        height: 54px;
        margin: 0 9px 6px 0;
        border: 2px solid #154a80;
        border-radius: 5px;
        background: linear-gradient(#fdfdfd, #e2e2e4 50%, #c8c6ca);
        box-shadow: inset 0 0 0 2px #fff;
        font: 17px 'Liberation Mono', monospace;
        color: #000;
        text-indent: 28px;
    }
    .speed {
        width: 164px;
        font: 18px/26px 'Liberation Mono', monospace;
        text-align: center;
    }
    .speed label {
        display: block;
    }
    progress {
        display: block;
        box-sizing: border-box;
        width: 164px;
        height: 13px;
        border: 1px solid #fff;
        appearance: none;
        background: #ebe8ee;
    }
    progress::-webkit-progress-bar {
        background: #ebe8ee;
    }
    progress::-webkit-progress-value {
        background: #3a9cf0;
    }
    .canvas {
        position: relative;
        flex: 1;
        min-height: 0;
        background: #394b74;
    }
    .dots {
        position: absolute;
        inset: 0;
        width: 100%;
        height: 100%;
        overflow: visible;
    }
    .dots path {
        stroke: #d6c08c;
        stroke-opacity: 0.7;
        stroke-width: 2;
    }
    .placed {
        position: absolute;
        left: 30px;
        top: 31px;
        box-sizing: border-box;
        width: 282px;
        height: 64px;
        border: solid #fff;
        border-width: 3px 2px 2px 3px;
        border-right-color: #111;
        border-bottom-color: #111;
        background: #b0b0b0;
        font-size: 35px;
        line-height: 52px;
        text-align: center;
        white-space: nowrap;
    }
    .handle {
        position: absolute;
        left: 50%;
        top: 50%;
        width: 8px;
        height: 8px;
        margin: -6px;
        border: 2px solid #fff;
        background: #000;
    }
    .nw,
    .w,
    .sw {
        left: -3px;
    }
    .ne,
    .e,
    .se {
        left: calc(100% + 1px);
    }
    .nw,
    .n,
    .ne {
        top: -2px;
    }
    .sw,
    .s,
    .se {
        top: calc(100% + 1px);
    }

    .status {
        display: flex;
        align-items: center;
        flex: none;
        height: 28px;
        border-top: 2px solid #a0a0a0;
        box-shadow: 0 -2px 0 #fff;
        background: #f0eeee;
        z-index: 1;
    }
    .ready {
        flex: 1;
        padding-left: 3px;
        font-family: var(--ja);
    }
    .cell {
        box-sizing: border-box;
        height: 24px;
        border-right: 1px solid #c8c8c8;
        overflow: hidden;
        white-space: nowrap;
    }
    .cell b {
        display: inline-block;
        width: 39px;
        font-weight: normal;
    }
    .x {
        width: 68px;
    }
    .y {
        width: 75px;
        padding-left: 8px;
    }
    .y b {
        width: 37px;
    }
    .s1 {
        width: 31px;
    }
    .s2 {
        width: 49px;
    }
    .s3 {
        width: 58px;
    }
    .rc {
        width: 65px;
        padding-left: 8px;
    }
    .size-grip {
        width: 30px;
        height: 24px;
        background: radial-gradient(circle at 2px 2px, #b0b0b0 1px, transparent 2px) 0 0 / 5px 5px;
        clip-path: polygon(100% 40%, 100% 100%, 50% 100%);
    }
</style>
